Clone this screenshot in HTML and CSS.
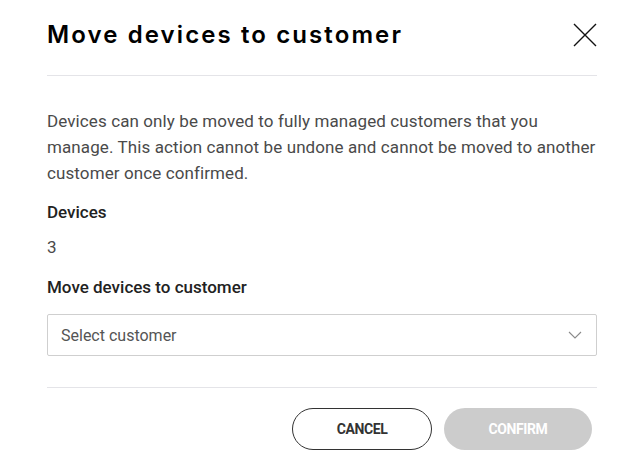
FILE: index.html
```html
<!DOCTYPE html>
<html lang="en">
<head>
<meta charset="utf-8">
<title>Move devices to customer</title>
<link rel="stylesheet" href="styles.css">
</head>
<body>
<div class="dialog">
  <header class="dialog-header">
    <h1 class="dialog-title">Move devices to customer</h1>
    <button class="close-btn" aria-label="Close">
      <svg width="24" height="24" viewBox="0 0 24 24"><path d="M1 1L23 23M23 1L1 23" stroke="#111" stroke-width="1.4" fill="none"/></svg>
    </button>
  </header>
  <div class="dialog-body">
    <p class="desc">Devices can only be moved to fully managed customers that you manage. This action cannot be undone and cannot be moved to another customer once confirmed.</p>
    <div class="label label-devices">Devices</div>
    <div class="value">3</div>
    <div class="label label-move">Move devices to customer</div>
    <div class="select">
      <span class="select-text">Select customer</span>
      <svg class="chevron" width="14" height="8" viewBox="0 0 14 8"><path d="M1 1L7 7L13 1" stroke="#8a8a8a" stroke-width="1.1" fill="none"/></svg>
    </div>
  </div>
  <footer class="dialog-footer">
    <button class="btn btn-cancel">CANCEL</button>
    <button class="btn btn-confirm">CONFIRM</button>
  </footer>
</div>
</body>
</html>
```
FILE: styles.css
```css
html, body {
  margin: 0;
  padding: 0;
  background: #fff;
}
body {
  font-family: Roboto, "Liberation Sans", sans-serif;
}
.dialog {
  width: 550px;
  padding: 0 46px 0 47px;
}
.dialog-header {
  height: 76px;
  border-bottom: 1px solid #e4e4e8;
  display: flex;
  align-items: center;
  justify-content: space-between;
  box-sizing: border-box;
  padding-bottom: 6px;
}
.dialog-title {
  margin: 0;
  font-family: Inter, "Liberation Sans", sans-serif;
  font-weight: 600;
  font-size: 24px;
  line-height: 30px;
  letter-spacing: 2.1px;
  color: #000;
}
.close-btn {
  border: none;
  background: none;
  padding: 0;
  width: 24px;
  height: 24px;
  display: flex;
}
.dialog-body {
  padding-top: 32px;
  display: flex;
  flex-direction: column;
}
.desc {
  margin: 0;
  font-size: 17px;
  line-height: 26px;
  letter-spacing: 0.1px;
  color: #4a4a4a;
}
.label {
  font-size: 17px;
  line-height: 24px;
  font-weight: 500;
  color: #222;
}
.label-devices {
  margin-top: 14px;
}
.value {
  margin-top: 11px;
  font-size: 17px;
  line-height: 24px;
  color: #4a4a4a;
}
.label-move {
  margin-top: 16px;
}
.select {
  margin-top: 15px;
  height: 42px;
  box-sizing: border-box;
  border: 1px solid #cfcfcf;
  border-radius: 2px;
  display: flex;
  align-items: center;
  justify-content: space-between;
  padding: 0 14px 0 13px;
}
.select-text {
  font-size: 16px;
  color: #555;
}
.dialog-footer {
  margin-top: 31px;
  border-top: 1px solid #e4e4e8;
  padding: 20px 5px 0 0;
  display: flex;
  justify-content: flex-end;
  gap: 12px;
}
.btn {
  height: 42px;
  border-radius: 21px;
  font-family: Roboto, "Liberation Sans", sans-serif;
  font-size: 14px;
  font-weight: 700;
  letter-spacing: -0.4px;
  box-sizing: border-box;
}
.btn-cancel {
  width: 140px;
  border: 1px solid #333;
  background: #fff;
  color: #333;
}
.btn-confirm {
  width: 148px;
  border: none;
  background: #cccccc;
  color: #fff;
}
```
